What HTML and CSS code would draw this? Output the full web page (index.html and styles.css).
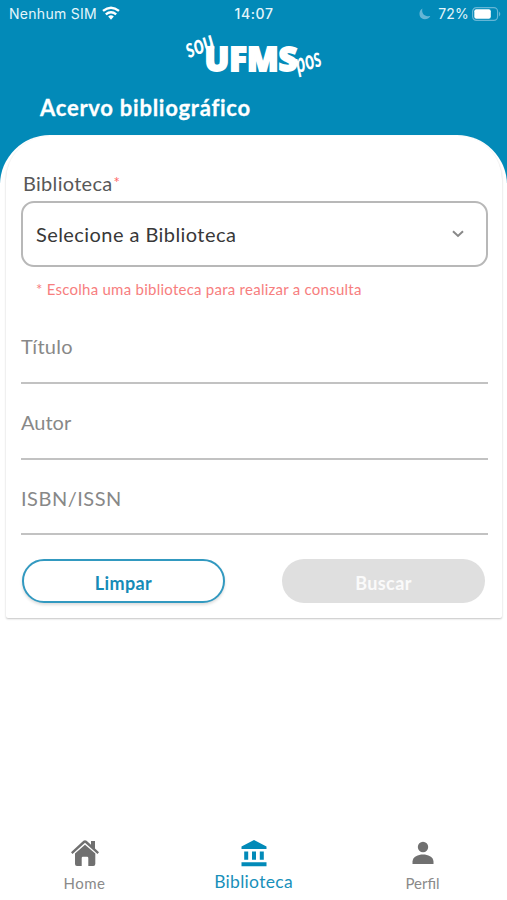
FILE: index.html
```html
<!DOCTYPE html>
<html lang="pt-BR">
<head>
<meta charset="utf-8">
<meta name="viewport" content="width=device-width, initial-scale=1">
<title>Acervo bibliográfico</title>
<link rel="stylesheet" href="styles.css">
</head>
<body>
<div class="app">
  <header class="header">
    <div class="status">
      <div class="carrier"><span>Nenhum SIM</span>
        <svg width="18" height="14" viewBox="0 0 18 14" fill="none" stroke="#fff" stroke-width="2.4"><path d="M1 4.9Q9 -1.6 17 4.9M3.8 8.3Q9 4 14.2 8.3"/><path d="M6.2 10.6Q9 8.1 11.8 10.6L9 13.7Z" fill="#fff" stroke="none"/></svg>
      </div>
      <time class="clock">14:07</time>
      <div class="power">
        <svg width="12" height="12" viewBox="0 0 12 12"><path d="M3.4.5C-.4 2.800-.2 8 2.300 10c3 2.300 7.200 1.300 9-2C5.600 9 2.200 5.400 3.400.5Z" fill="#65b6d6"/></svg>
        <span>72%</span>
        <svg width="29" height="14" viewBox="0 0 29 14"><rect x=".6" y=".6" width="25" height="12.8" rx="3.8" fill="none" stroke="#65b6d6" stroke-width="1.2"/><rect x="2.300" y="2.300" width="16.500" height="9.400" rx="2" fill="#fff"/><path d="M27 4.600q2.600 2.400 0 4.800Z" fill="#65b6d6"/></svg>
      </div>
    </div>
    <svg class="logo" width="142" height="58" viewBox="0 0 142 58" fill="#fff">
      <text class="logo-main" x="20.500" y="43" textLength="93" lengthAdjust="spacingAndGlyphs">UFMS</text>
      <text class="logo-script" transform="translate(5 30) rotate(-21)" textLength="29" lengthAdjust="spacingAndGlyphs">sou</text>
      <text class="logo-script" transform="translate(114 45) rotate(-17)" textLength="26" lengthAdjust="spacingAndGlyphs">pos</text>
    </svg>
    <h1 class="title">Acervo bibliográfico</h1>
  </header>
  <main class="sheet">
    <form class="card">
      <div class="label">Biblioteca<span class="required">*</span></div>
      <div class="select"><span class="select-text">Selecione a Biblioteca</span>
        <svg width="12" height="8" viewBox="0 0 12 8" fill="none" stroke="#888" stroke-width="2"><path d="M1 1.300l5 4.700 5-4.700"/></svg>
      </div>
      <div class="hint">* Escolha uma biblioteca para realizar a consulta</div>
      <div class="field"><span class="f-title">Título</span></div>
      <div class="field"><span class="f-author">Autor</span></div>
      <div class="field"><span class="f-isbn">ISBN/ISSN</span></div>
      <div class="actions">
        <button type="button" class="btn clear">Limpar</button>
        <button type="button" class="btn search">Buscar</button>
      </div>
    </form>
  </main>
  <nav class="tabs">
    <a class="tab">
      <svg width="30" height="28" viewBox="0 0 30 28" fill="#707070"><path d="M1 13.200L13.400 1.800q1.600-1.300 3.200 0L21 5.800V2h4v7.400l4 3.800-1.500 1.700L15 3.800 2.500 14.900Z"/><path d="M5 14.500L15 5.800l10.300 8.700V25q0 2-2 2h-5v-8q0-1.200-1.200-1.200h-4.200Q11.700 17.800 11.700 19v8H7q-2 0-2-2Z"/></svg>
      <span class="t-home">Home</span>
    </a>
    <a class="tab active">
      <svg width="26" height="27" viewBox="0 0 26 27" fill="#028ab8"><path d="M13 0L25.500 6.500V9H.5V6.500ZM3.200 11.500h4v8.200h-4ZM11 11.500h4v8.200h-4ZM18.800 11.500h4v8.200h-4ZM.5 22.300h25v4H.5Z"/></svg>
      <span class="t-lib">Biblioteca</span>
    </a>
    <a class="tab">
      <svg class="person" width="22" height="24" viewBox="0 0 22 24" fill="#707070"><circle cx="11" cy="6" r="5.200"/><path d="M.5 23v-2.500C1 15.500 6 13.500 11 13.500s10 2 10.500 7V23Z"/></svg>
      <span class="t-profile">Perfil</span>
    </a>
  </nav>
</div>
</body>
</html>
```
FILE: styles.css
```css
* { box-sizing: border-box; }
body { margin: 0; background: #fff; font-family: Lato, sans-serif; }
.app { height: 900px; display: flex; flex-direction: column; background: linear-gradient(#028ab8 183px, #fff 183px); }
.header { height: 135px; color: #fff; display: flex; flex-direction: column; }
.status { height: 28px; padding: 0 6px 0 9px; display: grid; grid-template-columns: 1fr auto 1fr; align-items: center; font: 14px/28px Inter, sans-serif; color: #e5f6fb; }
.carrier, .power { display: flex; align-items: center; gap: 5px; }
.carrier span { letter-spacing: .28px; }
.carrier svg { margin-bottom: 2px; }
.clock { font-weight: 500; letter-spacing: .6px; margin-right: 2px; }
.power { justify-content: flex-end; gap: 3px; }
.power span { margin-left: 4px; letter-spacing: .2px; }
.logo { flex: none; margin: 0 0 0 184px; overflow: visible; }
.logo-main { font: 800 34px "Open Sans", sans-serif; stroke: #fff; stroke-width: 1.8px; }
.logo-script { font: italic 700 27px/1 Lato, sans-serif; }
.title { margin: 7px 0 0 40px; font-size: 22px; line-height: 30px; font-weight: 700; letter-spacing: .75px; white-space: nowrap; -webkit-text-stroke: .3px #fff; }
.sheet { height: 687px; padding: 1px 5px 0 6px; background: #fff; border-radius: 50px 50px 0 0; }
.card { height: 482px; padding: 35px 14px 0 15px; border-radius: 44px 44px 2px 2px; box-shadow: 0 1px 2px #c4c4c4; display: flex; flex-direction: column; }
.label { padding-left: 2px; height: 30px; font-size: 20px; line-height: 24px; color: #585858; letter-spacing: .3px; white-space: nowrap; }
.required { color: #f66; font-size: 15px; line-height: 1; vertical-align: 3px; margin-left: 1px; }
.select { flex: none; height: 66px; width: 467px; border: 2px solid #b8b8b8; border-radius: 13px; padding: 0 22px 0 13px; display: flex; align-items: center; justify-content: space-between; }
.select-text { font-size: 20px; color: #383838; letter-spacing: .43px; white-space: nowrap; }
.hint { margin: 11px 0 0 15px; height: 22px; font-size: 15px; line-height: 22px; color: #f77e7e; letter-spacing: .25px; white-space: nowrap; }
.field { height: 75.7px; width: 467px; padding-top: 24px; border-bottom: 2px solid #c2c2c2; color: #888; font-size: 20px; line-height: 28px; }
.hint + .field { height: 84px; padding-top: 32px; }
.f-title { letter-spacing: .25px; }
.f-isbn { letter-spacing: .5px; }
.actions { margin: 24px 2px 0 1px; width: 463px; display: flex; justify-content: space-between; }
.btn { height: 44px; width: 203px; padding: 3px 0 0; border-radius: 22px; font: 700 18px/28px Lato, sans-serif; letter-spacing: .4px; }
.clear { border: 2px solid #3299c0; background: #fff; color: #158bb7; box-shadow: 0 2px 3px #ddd; }
.search { border: 0; background: #dfdfdf; color: #fafafa; }
.tabs { height: 78px; display: grid; grid-template-columns: repeat(3, 1fr); background: #fff; }
.tab { display: flex; flex-direction: column; align-items: center; justify-content: flex-end; padding-bottom: 6px; gap: 5px; color: #8a8a8a; font-size: 15px; line-height: 22px; }
.t-home { letter-spacing: .5px; }
.person { margin-bottom: 2px; }
.active { color: #1890ba; font-size: 17.500px; letter-spacing: .3px; padding-bottom: 7px; gap: 4px; }
```
